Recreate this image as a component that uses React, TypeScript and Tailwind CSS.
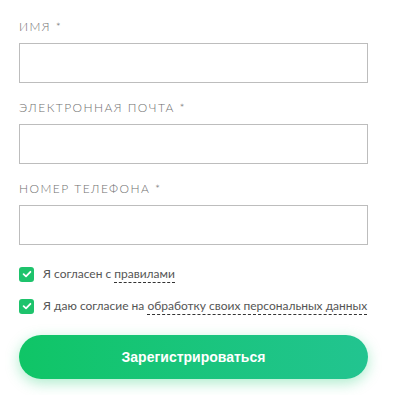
import React from 'react';

const Field: React.FC<{ label: string }> = ({ label }) => (
    <div>
        <div className="text-[12px] leading-4 tracking-[0.12em] uppercase font-light text-[#6f6f6f] mb-2">{label} *</div>
        <input type="text" className="block w-full h-10 border border-[#bdbdbd] bg-white outline-none" />
    </div>
);

const Check: React.FC<{ children: React.ReactNode }> = ({ children }) => (
    <label className="flex items-center gap-[9px] text-[12px] text-[#555]">
        <span className="w-[15px] h-[15px] rounded-[3px] bg-[#1ec36c] flex items-center justify-center shrink-0">
            <svg width="10" height="10" viewBox="0 0 10 10" fill="none">
                <path d="M1.6 5.2 L4 7.4 L8.4 2.8" stroke="#fff" strokeWidth="1.8" strokeLinecap="round" strokeLinejoin="round" />
            </svg>
        </span>
        <span>{children}</span>
    </label>
);

const Link: React.FC<{ children: React.ReactNode }> = ({ children }) => (
    <span className="border-b border-dashed border-[#333] pb-[1px]">{children}</span>
);

export default function App() {
    return (
        <div className="w-[400px] h-[395px] bg-white px-[19px] pt-[19px]" style={{ fontFamily: 'Lato, "Open Sans", sans-serif' }}>
            <div className="w-[349px] flex flex-col gap-[17px]">
                <Field label="Имя" />
                <Field label="Электронная почта" />
                <Field label="Номер телефона" />
            </div>
            <div className="w-[349px] mt-5 flex flex-col gap-[14px]">
                <Check>Я согласен с <Link>правилами</Link></Check>
                <Check>Я даю согласие на <Link>обработку своих персональных данных</Link></Check>
            </div>
            <button
                className="mt-[20px] w-[349px] h-[44px] rounded-full bg-gradient-to-r from-[#0fc566] to-[#22c490] text-white text-[14px] font-bold shadow-[0_4px_14px_rgba(20,200,110,0.35)]"
                style={{ fontFamily: '"Liberation Sans", Arial, sans-serif' }}
            >
                Зарегистрироваться
            </button>
        </div>
    );
}
